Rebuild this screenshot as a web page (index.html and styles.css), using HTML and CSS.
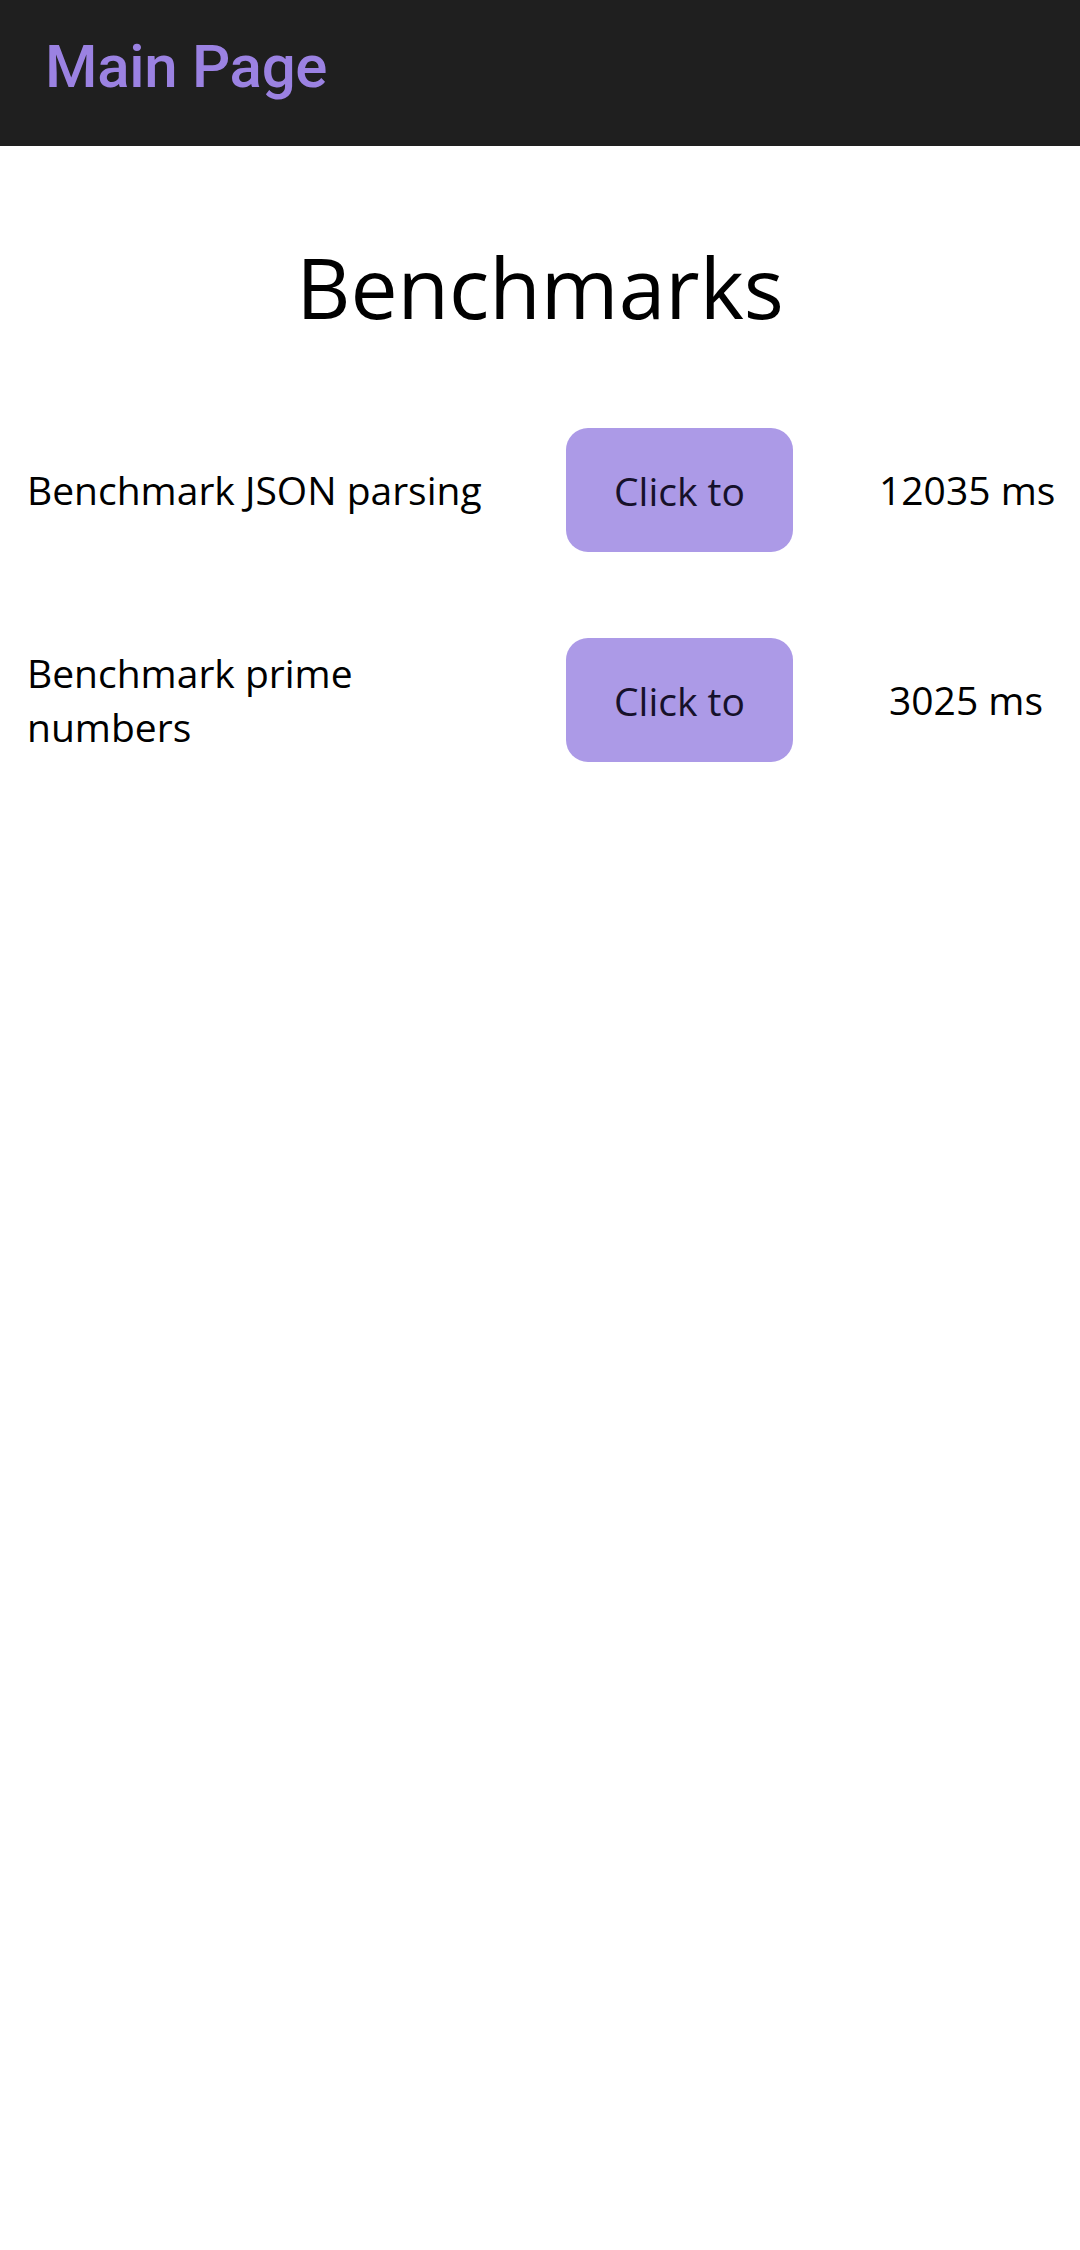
FILE: index.html
```html
<!DOCTYPE html>
<html>
<head>
<meta charset="utf-8">
<link rel="stylesheet" href="styles.css">
</head>
<body>
<header class="topbar">
  <h1 class="brand">Main Page</h1>
</header>
<main class="content">
  <h2 class="page-title">Benchmarks</h2>
  <div class="bench-list">
    <div class="bench-row">
      <div class="bench-name">Benchmark JSON parsing</div>
      <button class="bench-btn">Click to</button>
      <div class="bench-result"><span>12035 ms</span></div>
    </div>
    <div class="bench-row">
      <div class="bench-name">Benchmark prime numbers</div>
      <button class="bench-btn">Click to</button>
      <div class="bench-result"><span>3025 ms</span></div>
    </div>
  </div>
</main>
</body>
</html>
```

FILE: styles.css
```css
html, body {
  margin: 0;
  padding: 0;
  background: #ffffff;
}
body {
  width: 1080px;
  min-height: 2250px;
  font-family: "Open Sans", "Noto Sans", sans-serif;
  color: #000000;
}
.topbar {
  height: 146px;
  box-sizing: border-box;
  background: #1f1f1f;
  padding: 32px 0 0 45px;
}
.brand {
  margin: 0;
  font-family: Roboto, "Liberation Sans", sans-serif;
  font-weight: 500;
  font-size: 60px;
  line-height: 70px;
  color: #9b82e2;
  letter-spacing: -0.3px;
}
.content {
  padding: 0 27px;
}
.page-title {
  margin: 84px 0 0 0;
  text-align: center;
  font-weight: 400;
  font-size: 84px;
  line-height: 114px;
  color: #000;
}
.bench-list {
  margin-top: 84px;
  display: flex;
  flex-direction: column;
  gap: 86px;
}
.bench-row {
  display: grid;
  grid-template-columns: 470px 227px 1fr;
  column-gap: 69px;
  align-items: center;
}
.bench-name {
  font-size: 39px;
  line-height: 54px;
}
.bench-btn {
  width: 227px;
  height: 124px;
  border: none;
  border-radius: 22px;
  background: #ac9ae7;
  color: #16112b;
  font-family: "Open Sans", "Noto Sans", sans-serif;
  font-size: 39px;
  padding: 0;
  margin-left: 0;
}
.bench-result {
  display: flex;
  justify-content: center;
  font-size: 39px;
  line-height: 54px;
  white-space: nowrap;
  margin-left: 17px;
}
```
